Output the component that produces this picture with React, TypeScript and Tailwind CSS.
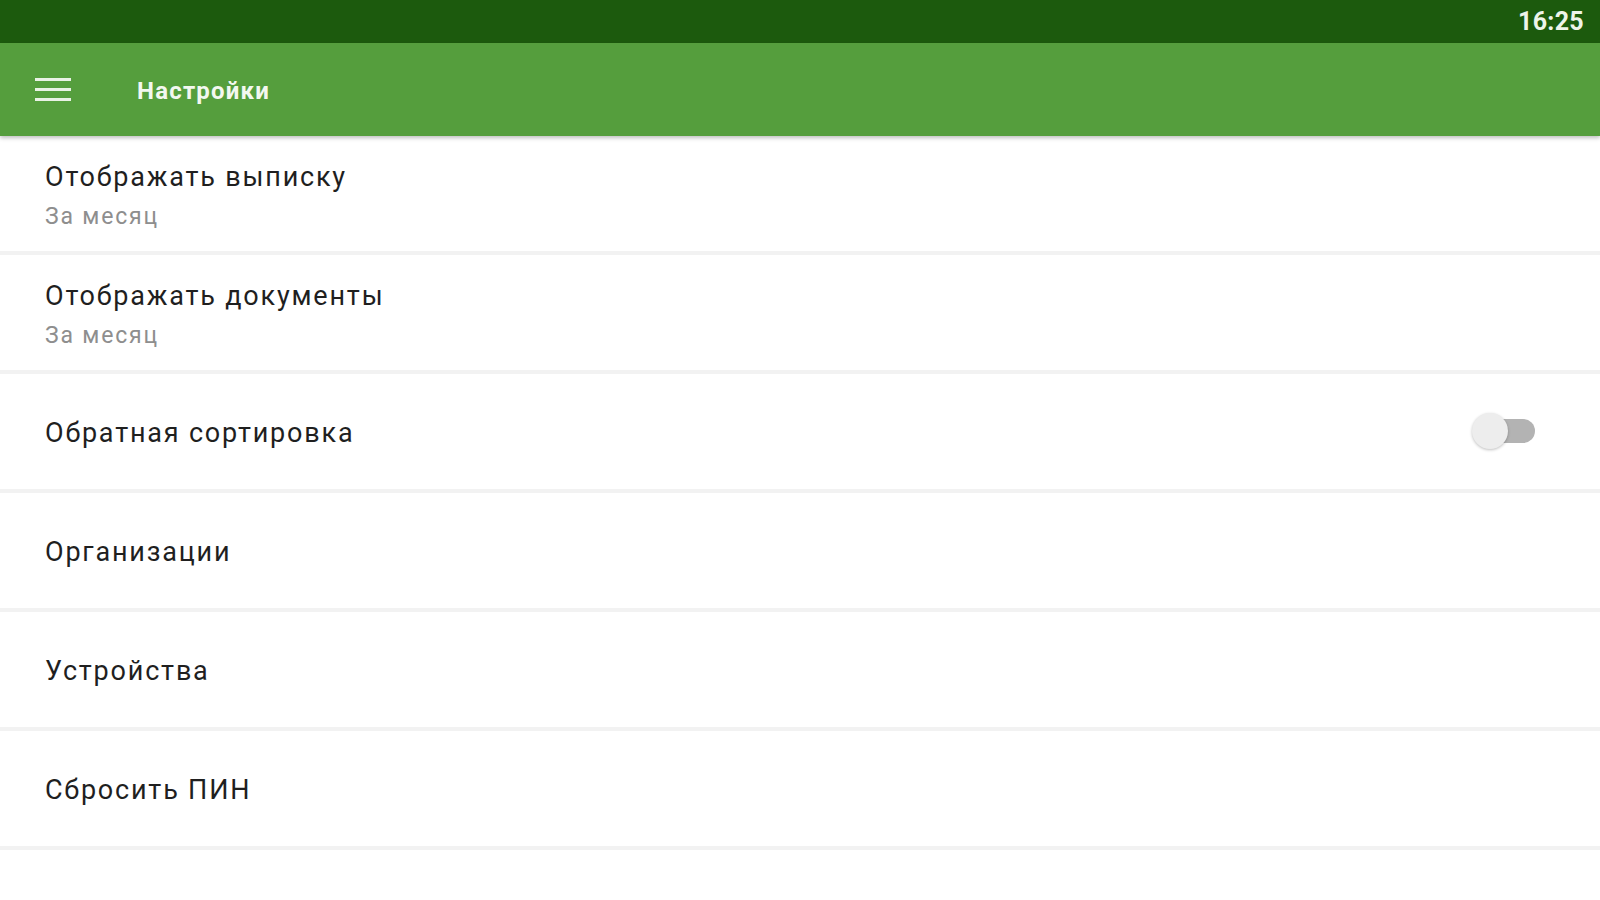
import { useState } from "react";

type Row = {
  title: string;
  summary?: string;
  toggle?: boolean;
};

const rows: Row[] = [
  { title: "Отображать выписку", summary: "За месяц" },
  { title: "Отображать документы", summary: "За месяц" },
  { title: "Обратная сортировка", toggle: true },
  { title: "Организации" },
  { title: "Устройства" },
  { title: "Сбросить ПИН" },
];

function Toggle({ on, onChange }: { on: boolean; onChange: () => void }) {
  return (
    <button
      type="button"
      onClick={onChange}
      className="relative mr-[65px] h-[37px] w-[63px] shrink-0"
      aria-pressed={on}
    >
      <span className="absolute left-[6px] top-[6px] h-[24px] w-[57px] rounded-full bg-[#b3b3b3]" />
      <span className="absolute left-0 top-0 h-[36px] w-[36px] rounded-full bg-[#ededed] shadow-[0_1px_3px_rgba(0,0,0,0.25)]" />
    </button>
  );
}

export default function App() {
  const [sorted, setSorted] = useState(false);

  return (
    <div className="min-h-[900px] bg-white font-['Roboto','Liberation_Sans',sans-serif]">
      <div className="flex h-[43px] items-center justify-end bg-[#1c5a0d] pr-[16px]">
        <span className="text-[25px] font-bold leading-none tracking-[0.3px] text-[#eef4ea]">16:25</span>
      </div>

      <header className="relative z-10 flex h-[93px] items-center bg-[#559e3d] shadow-[0_2px_4px_rgba(0,0,0,0.25)]">
        <div className="ml-[35px] flex w-[36px] flex-col gap-[7px]">
          <span className="h-[3px] bg-[#e9f2e5]" />
          <span className="h-[3px] bg-[#e9f2e5]" />
          <span className="h-[3px] bg-[#e9f2e5]" />
        </div>
        <h1 className="ml-[66px] pt-[2px] text-[24px] font-bold tracking-[1.2px] text-[#f3f8f0]">Настройки</h1>
      </header>

      <ul>
        {rows.map((row) => (
          <li key={row.title} className="border-b-4 border-[#f2f2f2]">
            <div className="flex h-[115px] items-center pl-[45px]">
              <div className={row.summary ? "flex flex-1 flex-col pt-[4px]" : "flex flex-1 flex-col pt-[2px]"}>
                <span className="text-[27px] leading-[36px] tracking-[1.8px] text-[#1f1f1f]">{row.title}</span>
                {row.summary && (
                  <span className="mt-[6px] text-[23px] leading-[32px] tracking-[1.8px] text-[#8e8e8e]">
                    {row.summary}
                  </span>
                )}
              </div>
              {row.toggle && <Toggle on={sorted} onChange={() => setSorted(!sorted)} />}
            </div>
          </li>
        ))}
      </ul>
    </div>
  );
}
